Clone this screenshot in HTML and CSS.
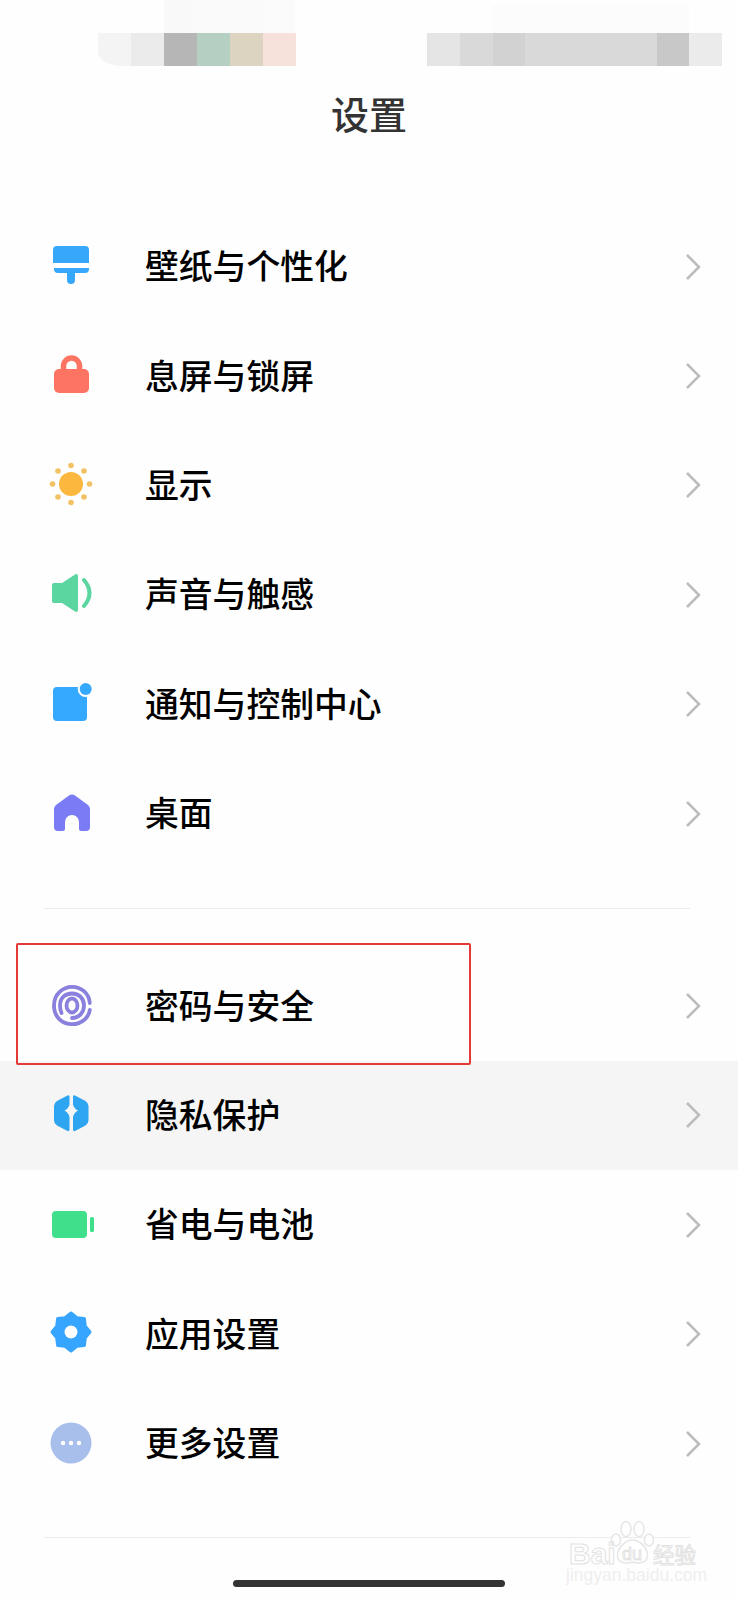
FILE: index.html
```html
<!DOCTYPE html>
<html lang="zh-CN">
<head>
    <meta charset="UTF-8">
    <meta name="viewport" content="width=device-width, initial-scale=1.0">
    <title>设置</title>
    <link rel="stylesheet" href="styles.css">
</head>
<body>

    <div class="status-bar">
        <div class="blur-left">
            <span class="c1"></span><span class="c2"></span><span class="c3"></span><span class="c4"></span><span class="c5"></span><span class="c6"></span>
        </div>
        <div class="blur-right">
            <span class="c7"></span><span class="c8"></span><span class="c9"></span><span class="c8"></span><span class="c8"></span><span class="c8"></span><span class="c8"></span><span class="c10"></span><span class="c2"></span>
        </div>
    </div>

    <h1 class="title">设置</h1>

    <ul class="group">
        <li class="row">
            <svg class="icon" viewBox="0 0 50 50"><path fill="#36a7fb" d="M7 21V8a4 4 0 0 1 4-4h28a4 4 0 0 1 4 4v13z"/><path fill="#36a7fb" d="M8 26h35v1a4 4 0 0 1-4 4h-10v7a4 4 0 0 1-8 0v-7h-9a4 4 0 0 1-4-4z"/></svg>
            <span class="label">壁纸与个性化</span>
            <svg class="chevron" viewBox="0 0 16 28"><path d="M2 2l12 12L2 26"/></svg>
        </li>
        <li class="row">
            <svg class="icon" viewBox="0 0 50 50"><path fill="none" stroke="#fd7562" stroke-width="5.500" d="M17.500 22v-7a8 8 0 0 1 16 0v7"/><rect x="8" y="18" width="35" height="24" rx="5" fill="#fd7562"/></svg>
            <span class="label">息屏与锁屏</span>
            <svg class="chevron" viewBox="0 0 16 28"><path d="M2 2l12 12L2 26"/></svg>
        </li>
        <li class="row">
            <svg class="icon" viewBox="0 0 50 50"><circle cx="25" cy="24" r="12" fill="#fcb83e"/><g fill="#f2c265"><circle cx="25" cy="5.500" r="2.800"/><circle cx="25" cy="42.500" r="2.800"/><circle cx="6.500" cy="24" r="2.800"/><circle cx="43.500" cy="24" r="2.800"/><circle cx="12" cy="11" r="2.800"/><circle cx="38" cy="11" r="2.800"/><circle cx="12" cy="37" r="2.800"/><circle cx="38" cy="37" r="2.800"/></g></svg>
            <span class="label">显示</span>
            <svg class="chevron" viewBox="0 0 16 28"><path d="M2 2l12 12L2 26"/></svg>
        </li>
        <li class="row">
            <svg class="icon" viewBox="0 0 50 50"><path fill="#5bd6a0" d="M8 13h8L29 4.500q3-1.500 3 2v33q0 3.500-3 2L16 33H8q-2 0-2-2V15q0-2 2-2z"/><path fill="none" stroke="#5bd6a0" stroke-width="4" stroke-linecap="round" d="M38 10Q49 23 38 36"/></svg>
            <span class="label">声音与触感</span>
            <svg class="chevron" viewBox="0 0 16 28"><path d="M2 2l12 12L2 26"/></svg>
        </li>
        <li class="row">
            <svg class="icon" viewBox="0 0 50 50"><rect x="7" y="8" width="34" height="34" rx="4" fill="#35a8ff"/><circle cx="39.700" cy="10" r="8" fill="#fff"/><circle cx="39.700" cy="10" r="6" fill="#35a8ff"/></svg>
            <span class="label">通知与控制中心</span>
            <svg class="chevron" viewBox="0 0 16 28"><path d="M2 2l12 12L2 26"/></svg>
        </li>
        <li class="row">
            <svg class="icon" viewBox="0 0 50 50"><path fill="#7a7bf5" d="M23 6.500q3-2 6 0L42 16q2 2 2 4v18q0 4-4 4h-5q-2 0-2-2v-7a7 7 0 0 0-14 0v7q0 2-2 2h-5q-4 0-4-4V20q0-2 2-4z"/></svg>
            <span class="label">桌面</span>
            <svg class="chevron" viewBox="0 0 16 28"><path d="M2 2l12 12L2 26"/></svg>
        </li>
    </ul>

    <hr class="divider divider-top">

    <ul class="group">
        <li class="row row-marked">
            <svg class="icon" viewBox="0 0 50 50"><g fill="none" stroke="#8a80de" stroke-linecap="round"><path stroke-width="3.800" d="M43.800 22C43 12 35 5.800 26 5.800S8 13 8 24.500 16 43.200 26 43.200 43 36 43.800 29"/><path stroke-width="3.800" d="M15.500 32c-1-2.500-1.500-5-1.500-7.500C14 17 19 12.500 26 12.500s12 5 12 12c0 7-5 12.500-12 12.500"/><ellipse cx="26" cy="24.500" rx="5.500" ry="7" stroke-width="3.800"/></g></svg>
            <span class="label">密码与安全</span>
            <svg class="chevron" viewBox="0 0 16 28"><path d="M2 2l12 12L2 26"/></svg>
            <div class="mark"></div>
        </li>
        <li class="row row-active">
            <svg class="icon" viewBox="0 0 50 50"><path fill="#2ea5f0" d="M23.500 6V14.500Q22.500 18.500 18.500 20.500 22.500 22.500 23.500 27V40q-.5 1.500-2 1L11 35.500q-3-2-3-5V16q0-3 3-5L21.500 5.500q1.500-.5 2 .5z"/><path fill="#2ea5f0" d="M27 6V14.500Q28 18.500 32 20.500 28 22.500 27 27V40q.5 1.500 2 1L39.500 35.500q3-2 3-5V16q0-3-3-5L29 5.500q-1.500-.5-2 .5z"/></svg>
            <span class="label">隐私保护</span>
            <svg class="chevron" viewBox="0 0 16 28"><path d="M2 2l12 12L2 26"/></svg>
        </li>
        <li class="row">
            <svg class="icon" viewBox="0 0 50 50"><rect x="6" y="11" width="35" height="27" rx="4" fill="#3fdf8c"/><rect x="44" y="17" width="4" height="15" rx="1.500" fill="#3fdf8c"/></svg>
            <span class="label">省电与电池</span>
            <svg class="chevron" viewBox="0 0 16 28"><path d="M2 2l12 12L2 26"/></svg>
        </li>
        <li class="row">
            <svg class="icon" viewBox="0 0 50 50"><polygon fill="#35a5ff" stroke="#35a5ff" stroke-width="3" stroke-linejoin="round" points="25,4 30.900,8.700 38.400,9.600 39.300,17.100 44,23 39.300,28.900 38.400,36.400 30.900,37.300 25,42 19.100,37.300 11.600,36.400 10.700,28.900 6,23 10.700,17.100 11.600,9.600 19.100,8.700"/><circle cx="25" cy="23" r="6.500" fill="#fff"/></svg>
            <span class="label">应用设置</span>
            <svg class="chevron" viewBox="0 0 16 28"><path d="M2 2l12 12L2 26"/></svg>
        </li>
        <li class="row">
            <svg class="icon" viewBox="0 0 50 50"><ellipse cx="25" cy="24" rx="20.500" ry="20.500" fill="#a9bfeb"/><g fill="#fff"><circle cx="17" cy="24" r="2.200"/><circle cx="25" cy="24" r="2.200"/><circle cx="33" cy="24" r="2.200"/></g></svg>
            <span class="label">更多设置</span>
            <svg class="chevron" viewBox="0 0 16 28"><path d="M2 2l12 12L2 26"/></svg>
        </li>
    </ul>

    <hr class="divider divider-bottom">

    <div class="home-bar"></div>

    <div class="watermark">
        <svg class="paw" viewBox="0 0 46 46"><g fill="#fff" stroke="#e6e6e6" stroke-width="1.500"><ellipse cx="6" cy="20" rx="4.500" ry="6"/><ellipse cx="16" cy="9" rx="5" ry="7.500"/><ellipse cx="29" cy="9" rx="5" ry="7.500"/><ellipse cx="39" cy="20" rx="4.500" ry="6"/><path d="M22.500 20c7 0 15 8 15 15 0 8-8 9-15 7-7 2-15 1-15-7 0-7 8-15 15-15z"/></g></svg>
        <div class="wm-brand"><span class="wm-bai">Bai</span><span class="wm-du">du</span><span class="wm-jy">经验</span></div>
        <div class="wm-url">jingyan.baidu.com</div>
    </div>

</body>
</html>
```

FILE: styles.css
```css
/* 设置页 */
* {
    box-sizing: border-box;
}
html, body {
    margin: 0;
    padding: 0;
}
body {
    position: relative;
    height: 1600px;
    overflow: hidden;
    background-color: #fefefe;
    font-family: "Noto Sans CJK SC", "Noto Sans", sans-serif;
    color: #000;
}

/* 打码的状态栏 */
.status-bar {
    display: flex;
    height: 66px;
    padding: 33px 0 0 98px;
    background:
        linear-gradient(to right, transparent 164px, #f9f9f9 164px, #fafbfa 295px, transparent 295px) top / 100% 33px no-repeat,
        linear-gradient(to right, transparent 492px, #fcfcfc 492px, #fcfcfc 689px, transparent 689px) 0 5px / 100% 28px no-repeat;
}
.blur-left, .blur-right {
    display: flex;
}
.blur-right {
    margin-left: 131px;
}
.status-bar span {
    display: block;
    width: 33px;
    height: 33px;
}
.blur-right span {
    width: 32.800px;
}
.c1 { background-color: #f4f4f4; border-bottom-left-radius: 24px 14px; }
.c2 { background-color: #ebebeb; }
.c3 { background-color: #b6b6b6; }
.c4 { background-color: #b5cfc3; }
.c5 { background-color: #dcd3c0; }
.c6 { background-color: #f6e2da; }
.c7 { background-color: #e5e5e5; }
.c8 { background-color: #d9d9d9; }
.c9 { background-color: #d2d2d2; }
.c10 { background-color: #c8c8c8; }

.title {
    margin: 24px 0 0;
    height: 46px;
    line-height: 46px;
    font-size: 38px;
    font-weight: 500;
    text-align: center;
    color: #333;
}

.group {
    list-style: none;
    margin: 0;
    padding: 0;
}
.group:first-of-type {
    margin-top: 76px;
}
.row {
    position: relative;
    display: flex;
    align-items: center;
    height: 109.400px;
    padding-left: 46px;
}
.row-active {
    background-color: #f5f5f5;
}
.icon {
    flex: none;
    width: 50px;
    height: 50px;
}
.label {
    margin-left: 49px;
    margin-bottom: 4px;
    font-size: 33.800px;
    font-weight: 500;
}
.chevron {
    position: absolute;
    right: 37px;
    top: 50%;
    width: 16px;
    height: 28px;
    margin-top: -14px;
    fill: none;
    stroke: #bcbcbc;
    stroke-width: 2.500;
}

/* 红框标注 */
.mark {
    position: absolute;
    z-index: 1;
    left: 16px;
    top: -8px;
    width: 455px;
    height: 122px;
    border: 2px solid #e53935;
    border-radius: 2px;
}

.divider {
    width: 646px;
    height: 1px;
    margin-left: 44px;
    margin-right: 0;
    border: none;
    background-color: #ececec;
}
.divider-top {
    margin-top: 40px;
    margin-bottom: 42px;
}
.divider-bottom {
    margin-top: 39px;
    margin-bottom: 0;
}

.home-bar {
    width: 272px;
    height: 7px;
    margin: 42px 0 0 233px;
    border-radius: 4px;
    background-color: #333;
}

/* 水印 */
.watermark {
    position: absolute;
    left: 560px;
    top: 1520px;
    width: 150px;
    height: 70px;
    color: transparent;
    font-family: "Liberation Sans", sans-serif;
}
.paw {
    position: absolute;
    left: 50px;
    top: 0;
    width: 46px;
    height: 46px;
}
.wm-brand span {
    position: absolute;
    -webkit-text-stroke: 1px #e2e2e2;
}
.wm-bai {
    left: 9px;
    top: 21px;
    font-size: 30px;
    line-height: 26px;
    font-weight: 700;
}
.wm-du {
    left: 62px;
    top: 24px;
    font-size: 18px;
    line-height: 20px;
}
.wm-jy {
    left: 93px;
    top: 22px;
    font-size: 21.500px;
    line-height: 24px;
    font-family: "Noto Sans CJK SC", sans-serif;
}
.wm-url {
    position: absolute;
    left: 6px;
    top: 47px;
    font-size: 17.500px;
    line-height: 16px;
    white-space: nowrap;
    color: #efefef;
}
```
